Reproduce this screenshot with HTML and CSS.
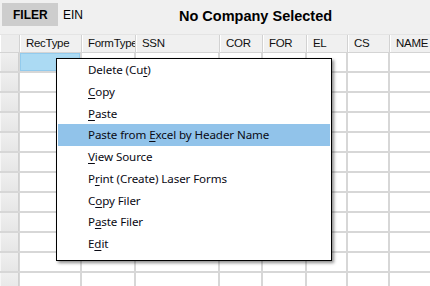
FILE: index.html
```html
<!DOCTYPE html>
<html>
<head>
<meta charset="utf-8">
<link rel="stylesheet" href="styles.css">
</head>
<body>
<div class="app">
  <div class="topbar">
    <div class="filer-btn">FILER</div>
    <div class="ein">EIN</div>
    <div class="company">No Company Selected</div>
  </div>
  <div class="grid header">
    <div class="hcell corner"></div>
    <div class="hcell">RecType</div>
    <div class="hcell">FormType</div>
    <div class="hcell">SSN</div>
    <div class="hcell">COR</div>
    <div class="hcell">FOR</div>
    <div class="hcell">EL</div>
    <div class="hcell">CS</div>
    <div class="hcell">NAME</div>
  </div>
  <div class="grid body" id="body">
    <div class="rh"></div><div class="c sel"></div><div class="c"></div><div class="c"></div><div class="c"></div><div class="c"></div><div class="c"></div><div class="c"></div><div class="c"></div>
    <div class="rh"></div><div class="c"></div><div class="c"></div><div class="c"></div><div class="c"></div><div class="c"></div><div class="c"></div><div class="c"></div><div class="c"></div>
    <div class="rh"></div><div class="c"></div><div class="c"></div><div class="c"></div><div class="c"></div><div class="c"></div><div class="c"></div><div class="c"></div><div class="c"></div>
    <div class="rh"></div><div class="c"></div><div class="c"></div><div class="c"></div><div class="c"></div><div class="c"></div><div class="c"></div><div class="c"></div><div class="c"></div>
    <div class="rh"></div><div class="c"></div><div class="c"></div><div class="c"></div><div class="c"></div><div class="c"></div><div class="c"></div><div class="c"></div><div class="c"></div>
    <div class="rh"></div><div class="c"></div><div class="c"></div><div class="c"></div><div class="c"></div><div class="c"></div><div class="c"></div><div class="c"></div><div class="c"></div>
    <div class="rh"></div><div class="c"></div><div class="c"></div><div class="c"></div><div class="c"></div><div class="c"></div><div class="c"></div><div class="c"></div><div class="c"></div>
    <div class="rh"></div><div class="c"></div><div class="c"></div><div class="c"></div><div class="c"></div><div class="c"></div><div class="c"></div><div class="c"></div><div class="c"></div>
    <div class="rh"></div><div class="c"></div><div class="c"></div><div class="c"></div><div class="c"></div><div class="c"></div><div class="c"></div><div class="c"></div><div class="c"></div>
    <div class="rh"></div><div class="c"></div><div class="c"></div><div class="c"></div><div class="c"></div><div class="c"></div><div class="c"></div><div class="c"></div><div class="c"></div>
    <div class="rh"></div><div class="c"></div><div class="c"></div><div class="c"></div><div class="c"></div><div class="c"></div><div class="c"></div><div class="c"></div><div class="c"></div>
    <div class="rh"></div><div class="c"></div><div class="c"></div><div class="c"></div><div class="c"></div><div class="c"></div><div class="c"></div><div class="c"></div><div class="c"></div>
  </div>
  <div class="menu">
    <div class="item">Delete (Cu<u>t</u>)</div>
    <div class="item"><u>C</u>opy</div>
    <div class="item"><u>P</u>aste</div>
    <div class="item active">Paste from <u>E</u>xcel by Header Name</div>
    <div class="item"><u>V</u>iew Source</div>
    <div class="item">P<u>r</u>int (Create) Laser Forms</div>
    <div class="item">C<u>o</u>py Filer</div>
    <div class="item">P<u>a</u>ste Filer</div>
    <div class="item">E<u>d</u>it</div>
  </div>
</div>
</body>
</html>
```

FILE: styles.css
```css
html, body {
  margin: 0;
  padding: 0;
  background: #ffffff;
}
.app {
  position: relative;
  width: 430px;
  height: 286px;
  overflow: hidden;
  font-family: "Liberation Sans", Arial, sans-serif;
  color: #000;
}
.topbar {
  height: 34px;
  background: #f0f0f0;
  display: flex;
  align-items: flex-start;
  padding-top: 3px;
  box-sizing: border-box;
}
.filer-btn {
  margin-left: 2px;
  width: 56px;
  height: 23px;
  background: #cdcdcd;
  font-weight: bold;
  font-size: 12px;
  line-height: 24px;
  padding-left: 11px;
  box-sizing: border-box;
}
.ein {
  margin-left: 5px;
  font-size: 12px;
  line-height: 24px;
}
.company {
  margin-left: 96px;
  font-weight: bold;
  font-size: 14.5px;
  line-height: 26px;
}
.grid {
  display: grid;
  grid-template-columns: 18px 60px 52px 82px 41px 42px 39px 40px 60px;
  column-gap: 2px;
  width: 480px;
}
.header {
  background: #f0f0f0;
  border-top: 1px solid #e4e4e4;
  border-bottom: 1px solid #d4d4d4;
  box-sizing: border-box;
  height: 19px;
}
.hcell {
  font-size: 11.5px;
  letter-spacing: -0.3px;
  line-height: 17px;
  padding-left: 6px;
  white-space: nowrap;
  overflow: hidden;
  margin-right: -2px;
  padding-right: 2px;
  border-right: 1px solid #d2d2d2;
  box-shadow: inset 1px 0 0 #ffffff;
  color: #111;
}
.hcell.corner {
  padding-left: 0;
  background: #ececec;
}
.body {
  background: #d7d7d7;
  row-gap: 2px;
  grid-auto-rows: 18px;
}
.c {
  background: #ffffff;
}
.rh {
  background: linear-gradient(#efefef, #e6e6e6);
  border-right: 1px solid #d0d0d0;
  margin-right: -1px;
  box-shadow: inset 1px 0 0 #f6f6f6;
}
.c.sel {
  background: #abdaf3;
  box-shadow: inset 0 0 0 1px #93cbed;
}
.menu {
  position: absolute;
  left: 56px;
  top: 58px;
  width: 276px;
  height: 203px;
  box-sizing: border-box;
  background: #ffffff;
  border: 1px solid #000;
  box-shadow: 2px 2px 3px rgba(0, 0, 0, 0.45);
  padding: 0 1px;
  font-family: "Noto Sans", "Open Sans", sans-serif;
  font-size: 11.6px;
  letter-spacing: -0.1px;
}
.item {
  height: 21.75px;
  line-height: 21.75px;
  padding-left: 30px;
  color: #0a0a14;
  white-space: nowrap;
}
.item.active {
  background: #91c3ea;
}
.item u {
  text-decoration-thickness: 1px;
  text-underline-offset: 2px;
}
```
